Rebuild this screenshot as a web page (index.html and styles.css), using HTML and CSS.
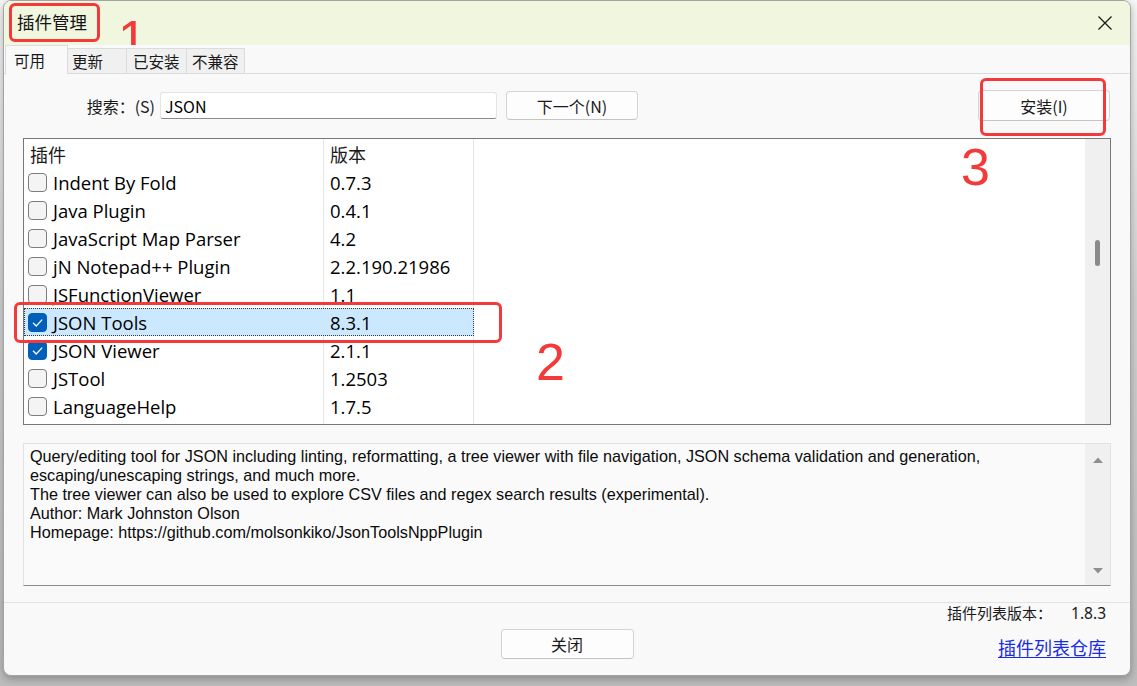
FILE: index.html
```html
<!DOCTYPE html>
<html lang="zh-CN">
<head>
<meta charset="utf-8">
<title>插件管理</title>
<link rel="stylesheet" href="styles.css">
</head>
<body>
<div class="window">
  <header class="titlebar">
    <span class="title">插件管理</span>
    <span class="close" aria-label="关闭">
      <svg width="16" height="16" viewBox="0 0 16 16"><path d="M1.5 1.5 L14.5 14.5 M14.5 1.5 L1.5 14.5" stroke="#1b1b1b" stroke-width="1.3" fill="none"/></svg>
    </span>
  </header>

  <nav class="tabs">
    <div class="tab active">可用</div>
    <div class="tab t-upd">更新</div>
    <div class="tab t-inst">已安装</div>
    <div class="tab t-inc">不兼容</div>
  </nav>

  <section class="panel">
    <div class="search-row">
      <label class="search-label" for="q">搜索：(S)</label>
      <input id="q" class="search-input" type="text" value="JSON">
      <button class="btn btn-next">下一个(N)</button>
      <button class="btn btn-install">安装(I)</button>
    </div>

    <div class="plugin-list">
      <div class="list-body">
        <div class="row head"><div class="cell name">插件</div><div class="cell ver">版本</div></div>
        <div class="row"><div class="cell name"><span class="cb"></span>Indent By Fold</div><div class="cell ver">0.7.3</div></div>
        <div class="row"><div class="cell name"><span class="cb"></span>Java Plugin</div><div class="cell ver">0.4.1</div></div>
        <div class="row"><div class="cell name"><span class="cb"></span>JavaScript Map Parser</div><div class="cell ver">4.2</div></div>
        <div class="row"><div class="cell name"><span class="cb"></span>jN Notepad++ Plugin</div><div class="cell ver">2.2.190.21986</div></div>
        <div class="row"><div class="cell name"><span class="cb"></span>JSFunctionViewer</div><div class="cell ver">1.1</div></div>
        <div class="row sel"><div class="cell name"><span class="cb on"><svg width="19" height="19" viewBox="0 0 19 19"><path d="M5 9.8 L8.2 13 L14.2 6.6" stroke="#fff" stroke-width="1.3" fill="none"/></svg></span>JSON Tools</div><div class="cell ver">8.3.1</div></div>
        <div class="row"><div class="cell name"><span class="cb on"><svg width="19" height="19" viewBox="0 0 19 19"><path d="M5 9.8 L8.2 13 L14.2 6.6" stroke="#fff" stroke-width="1.3" fill="none"/></svg></span>JSON Viewer</div><div class="cell ver">2.1.1</div></div>
        <div class="row"><div class="cell name"><span class="cb"></span>JSTool</div><div class="cell ver">1.2503</div></div>
        <div class="row"><div class="cell name"><span class="cb"></span>LanguageHelp</div><div class="cell ver">1.7.5</div></div>
      </div>
      <div class="vscroll"><span class="thumb"></span></div>
    </div>

    <div class="desc">
      <div class="desc-text">
        <div>Query/editing tool for JSON including linting, reformatting, a tree viewer with file navigation, JSON schema validation and generation,</div>
        <div>escaping/unescaping strings, and much more.</div>
        <div>The tree viewer can also be used to explore CSV files and regex search results (experimental).</div>
        <div>Author: Mark Johnston Olson</div>
        <div>Homepage: https://github.com/molsonkiko/JsonToolsNppPlugin</div>
      </div>
      <div class="vscroll arrows">
        <svg width="12" height="8" viewBox="0 0 12 8"><path d="M1 7 L6 1.5 L11 7 Z" fill="#8f8f8f"/></svg>
        <svg width="12" height="8" viewBox="0 0 12 8"><path d="M1 1 L6 6.5 L11 1 Z" fill="#8f8f8f"/></svg>
      </div>
    </div>
  </section>

  <footer class="footer">
    <div class="footer-mid"><button class="btn btn-close">关闭</button></div>
    <div class="footer-right">
      <div class="list-version"><span>插件列表版本：</span><span class="num">1.8.3</span></div>
      <a class="repo-link" href="#">插件列表仓库</a>
    </div>
  </footer>
</div>

<div class="marks">
  <span class="mark-box mb-title"></span>
  <span class="mark-num mn-1">1</span>
  <span class="mark-box mb-row"></span>
  <span class="mark-num mn-2">2</span>
  <span class="mark-box mb-install"></span>
  <span class="mark-num mn-3">3</span>
</div>
</body>
</html>
```

FILE: styles.css
```css
* { box-sizing: border-box; }

html, body {
  margin: 0;
  padding: 0;
}

body {
  width: 1137px;
  height: 686px;
  overflow: hidden;
  position: relative;
  background: linear-gradient(to bottom, #f6f6f6 0, #d2d2d2 300px, #bdbdbd 686px);
  font-family: "Noto Sans CJK SC", "Noto Sans", sans-serif;
  color: #000;
}

/* dialog frame */
.window {
  margin-left: 3px;
  width: 1128px;
  height: 676px;
  display: flex;
  flex-direction: column;
  background: #f9f9f9;
  border: 1px solid #a4a4a4;
  border-radius: 8px;
  overflow: hidden;
  box-shadow: 0 3px 8px rgba(0, 0, 0, 0.28);
}

.titlebar {
  height: 44px;
  flex: none;
  display: flex;
  align-items: center;
  padding-left: 13px;
  background: #f1f6df;
}

.title {
  font-size: 17.5px;
  color: #141414;
  line-height: 1;
  margin-top: -2px;
}

.close {
  margin-left: auto;
  width: 46px;
  height: 44px;
  display: flex;
  align-items: center;
  justify-content: center;
  margin-right: 2px;
}

/* tab strip */
.tabs {
  height: 28px;
  flex: none;
  display: flex;
  align-items: flex-end;
  padding-left: 1px;
  background: #f9f9f9;
  position: relative;
  z-index: 1;
}

.tab {
  height: 25px;
  display: flex;
  align-items: center;
  padding: 0 4px;
  font-size: 15.5px;
  color: #1a1a1a;
  background: #f0f0f0;
  border: 1px solid #dcdcdc;
  border-bottom: none;
  margin-left: -1px;
  white-space: nowrap;
}

.tab.active {
  height: 29px;
  margin-bottom: -1px;
  background: #f9f9f9;
  padding-left: 8px;
  width: 63px;
  margin-left: 0;
}

.t-upd { width: 60px; }
.t-inst { width: 61px; padding-left: 6px; }
.t-inc { width: 59px; padding-left: 5px; }

/* main page of the "可用" tab */
.panel {
  height: 530px;
  flex: none;
  border-top: 1px solid #dcdcdc;
  border-bottom: 1px solid #e2e2e2;
  padding: 16px 19px 0 19px;
  display: flex;
  flex-direction: column;
}

.search-row {
  height: 31px;
  flex: none;
  display: flex;
  align-items: center;
}

.search-label {
  width: 132px;
  margin-right: 5px;
  text-align: right;
  font-size: 16px;
  color: #1a1a1a;
}

.search-input {
  width: 337px;
  height: 27px;
  margin: 0;
  padding: 0 4px;
  background: #fff;
  border: 1px solid #e4e4e4;
  border-bottom: 1px solid #8a8a8a;
  border-radius: 3px;
  font-family: "Noto Sans CJK SC", sans-serif;
  font-size: 16px;
  color: #000;
  outline: none;
}

.btn {
  margin: 0;
  padding: 0;
  background: #fdfdfd;
  border: 1px solid #d4d4d4;
  border-bottom-color: #c4c4c4;
  border-radius: 4px;
  font-family: "Noto Sans CJK SC", sans-serif;
  font-size: 16px;
  color: #1a1a1a;
}

.btn-next {
  width: 132px;
  height: 29px;
  margin-left: 9px;
}

.btn-install {
  width: 132px;
  height: 31px;
  margin-left: auto;
  margin-right: 1px;
}

/* plugin table */
.plugin-list {
  height: 287px;
  flex: none;
  margin-top: 17px;
  display: flex;
  background: #fff;
  border: 1px solid #777;
}

.list-body {
  flex: 1;
  overflow: hidden;
  background:
    linear-gradient(#e6e6e6, #e6e6e6) 299px 0 / 1px 100% no-repeat,
    linear-gradient(#e6e6e6, #e6e6e6) 449px 0 / 1px 100% no-repeat,
    #fff;
}

.row {
  height: 28px;
  display: flex;
  width: 450px;
}

.row.head { height: 29px; }

.cell {
  display: flex;
  align-items: center;
  height: 100%;
  border-right: 1px solid #e6e6e6;
  font-family: "Open Sans", "Noto Sans", sans-serif;
  font-size: 18.5px;
  color: #000;
  white-space: nowrap;
  overflow: hidden;
}

.cell.name { width: 300px; padding-left: 4px; }
.cell.ver { width: 150px; padding-left: 6px; }

.row.head .cell {
  font-family: "Noto Sans CJK SC", sans-serif;
  font-size: 18px;
  color: #1a1a1a;
}

.row.head .cell.name { padding-left: 6px; }

.row.sel {
  background: #cce8ff;
  outline: 1px dotted #3a3a3a;
  outline-offset: -1px;
}

.row.sel .cell { border-right-color: #cce8ff; }

.cb {
  width: 19px;
  height: 19px;
  flex: none;
  margin-right: 6px;
  border: 1px solid #7c7c7c;
  border-radius: 4px;
  background: #f4f4f4;
  display: flex;
  align-items: center;
  justify-content: center;
}

.cb.on {
  background: #005fb8;
  border-color: #005fb8;
}

.cb svg { display: block; flex: none; }

.vscroll {
  width: 25px;
  flex: none;
  background: #f0f0f0;
  position: relative;
}

.thumb {
  position: absolute;
  left: 10px;
  top: 101px;
  width: 5px;
  height: 26px;
  border-radius: 3px;
  background: #8a8a8a;
}

/* description box */
.desc {
  height: 143px;
  flex: none;
  margin-top: 18px;
  display: flex;
  background: #fafafa;
  border: 1px solid #e2e2e2;
  border-bottom-color: #8c8c8c;
}

.desc-text {
  flex: 1;
  padding: 3px 0 0 6px;
  font-family: "Liberation Sans", sans-serif;
  font-size: 16.2px;
  line-height: 19px;
  color: #0a0a0a;
  white-space: nowrap;
  overflow: hidden;
}

.vscroll.arrows {
  display: flex;
  flex-direction: column;
  justify-content: space-between;
  align-items: center;
  padding: 12px 0 10px 0;
}

.vscroll.arrows svg { display: block; }

/* bottom area */
.footer {
  flex: 1;
  display: grid;
  grid-template-columns: 1fr auto 1fr;
}

.footer-mid {
  grid-column: 2;
  padding-top: 26px;
}

.btn-close {
  width: 133px;
  height: 30px;
}

.footer-right {
  grid-column: 3;
  justify-self: end;
  display: flex;
  flex-direction: column;
  align-items: flex-end;
  padding-right: 24px;
}

.list-version {
  height: 20px;
  line-height: 20px;
  font-size: 15px;
  color: #1a1a1a;
  display: flex;
}

.list-version .num {
  margin-left: 19px;
  font-family: "Noto Sans", sans-serif;
  font-size: 15.5px;
}

.repo-link {
  margin-top: 12px;
  font-size: 18px;
  line-height: 24px;
  color: #1a2be0;
  text-decoration: underline;
  text-underline-offset: 2px;
}

/* red call-outs drawn over the dialog */
.marks {
  position: absolute;
  inset: 0;
  pointer-events: none;
}

.mark-box {
  position: absolute;
  border: 3px solid #f4393b;
  border-radius: 6px;
}

.mb-title { left: 9px; top: 3px; width: 91px; height: 39px; }
.mb-row { left: 14px; top: 302px; width: 488px; height: 41px; }
.mb-install { left: 980px; top: 78px; width: 126px; height: 58px; }

.mark-num {
  position: absolute;
  font-family: "Liberation Sans", sans-serif;
  font-size: 52px;
  line-height: 38px;
  height: 38px;
  color: #f4393b;
}

.mn-1 { left: 118px; top: 20px; }
.mn-2 { left: 536px; top: 343px; }
.mn-3 { left: 961px; top: 148px; }
```
